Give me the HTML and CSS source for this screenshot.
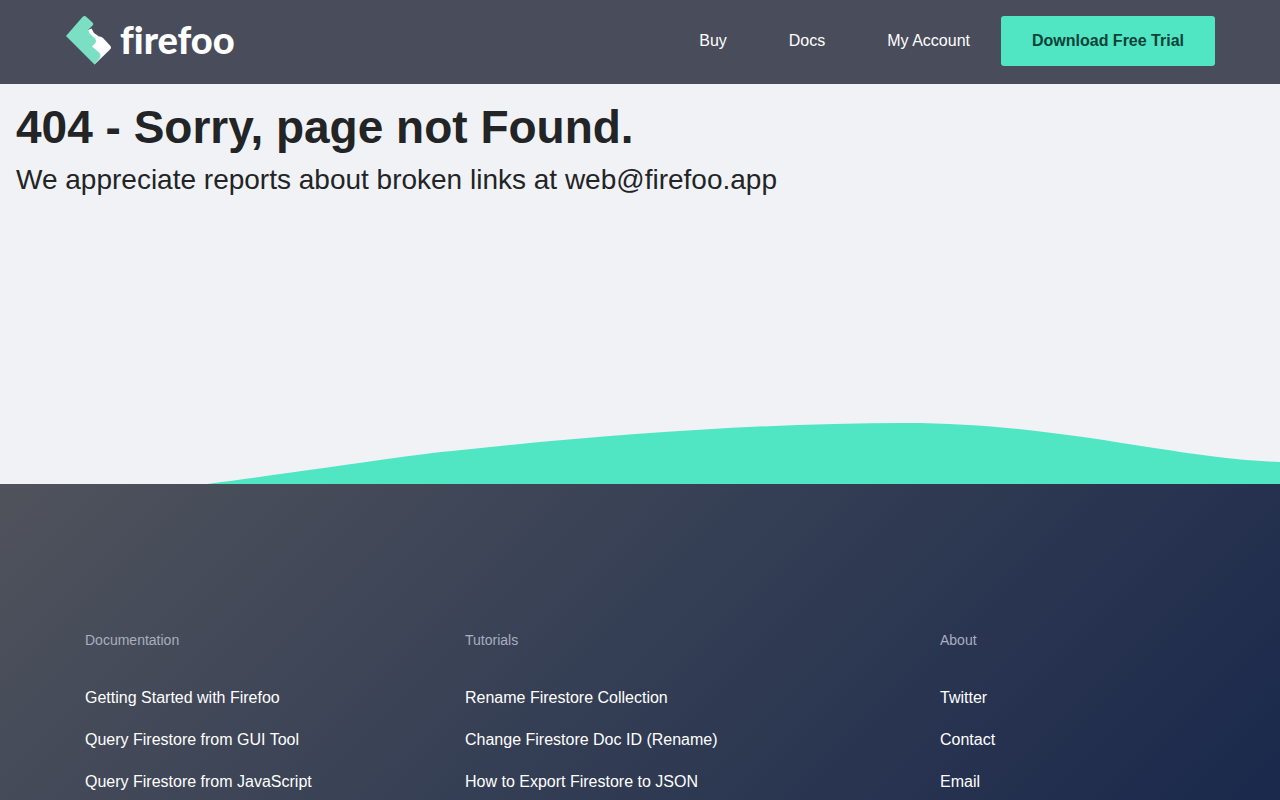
FILE: index.html
```html
<!DOCTYPE html>
<html lang="en">
<head>
    <meta charset="UTF-8">
    <meta name="viewport" content="width=device-width, initial-scale=1.0">
    <title>404 - Firefoo</title>
    <link rel="stylesheet" href="styles.css">
</head>
<body>
    <header class="header">
        <nav class="navbar">
            <a class="logo" href="#">
                <svg class="logo-mark" viewBox="0 0 45 49" width="45" height="49" aria-hidden="true">
                    <path fill="#ffffff" d="M22 14 L25.500 12.500 L28 17 L33 20.500 Q35 20 37 22 L44 29.500 Q46 31.500 44 33.500 L28.500 48.500 Z"/>
                    <path fill="#7adfc3" d="M0 20 L16.500 1 Q18.500 -1 20.500 1 L26.500 6.500 Q28 8 26.500 9.500 L22 14 L23.500 17.500 L29 22.500 Q31 25 29 27.500 L26 30.500 L33 36.500 Q36 39.500 33 43 L28.500 48.500 Z"/>
                </svg>
                <span class="logo-text">firefoo</span>
            </a>
            <div class="nav-links">
                <a class="nav-link" href="#">Buy</a>
                <a class="nav-link" href="#">Docs</a>
                <a class="nav-link" href="#">My Account</a>
                <a class="btn" href="#">Download Free Trial</a>
            </div>
        </nav>
    </header>

    <main class="content">
        <h1>404 - Sorry, page not Found.</h1>
        <p class="lead">We appreciate reports about broken links at web@firefoo.app</p>
    </main>

    <svg class="wave" viewBox="0 0 1280 61" preserveAspectRatio="none" aria-hidden="true">
        <path d="M207 61 C330 45 400 33 452 28 C600 12 760 0 905 0 C1060 0 1175 36 1280 39 V61 Z"/>
    </svg>

    <footer class="footer">
        <div class="footer-row">
            <div class="footer-col">
                <h2>Documentation</h2>
                <ul>
                    <li><a href="#">Getting Started with Firefoo</a></li>
                    <li><a href="#">Query Firestore from GUI Tool</a></li>
                    <li><a href="#">Query Firestore from JavaScript</a></li>
                </ul>
            </div>
            <div class="footer-col">
                <h2>Tutorials</h2>
                <ul>
                    <li><a href="#">Rename Firestore Collection</a></li>
                    <li><a href="#">Change Firestore Doc ID (Rename)</a></li>
                    <li><a href="#">How to Export Firestore to JSON</a></li>
                </ul>
            </div>
            <div class="footer-col">
                <h2>About</h2>
                <ul>
                    <li><a href="#">Twitter</a></li>
                    <li><a href="#">Contact</a></li>
                    <li><a href="#">Email</a></li>
                </ul>
            </div>
        </div>
    </footer>
</body>
</html>
```
FILE: styles.css
```css
* {
    box-sizing: border-box;
}

body {
    margin: 0;
    background-color: #f0f2f6;
    color: #222426;
    font-family: "Liberation Sans", Arial, sans-serif;
    font-size: 16px;
    line-height: 24px;
}

a {
    color: inherit;
    text-decoration: none;
}

.header {
    background-color: #494c5a;
    color: #ffffff;
    padding: 16px 16px 18px;
}

.navbar {
    display: flex;
    align-items: flex-start;
    justify-content: space-between;
    max-width: 1150px;
    margin: 0 auto;
}

.logo {
    display: flex;
    align-items: flex-start;
    gap: 9px;
    margin-left: 1px;
}

.logo-text {
    font-family: Lato, sans-serif;
    font-size: 38px;
    font-weight: 900;
    line-height: 46px;
    font-variant-ligatures: none;
}

.nav-links {
    display: flex;
    align-items: center;
}

.nav-link {
    padding: 13px 31px;
}

.btn {
    padding: 13px 31px;
    border-radius: 3px;
    background-color: #50e5c3;
    color: #0e4238;
    font-weight: bold;
}

.content {
    min-height: 339px;
    padding: 16px;
}

h1 {
    margin: 0 0 8px;
    font-size: 46px;
    line-height: 55px;
}

.lead {
    margin: 0;
    font-size: 28px;
    line-height: 34px;
}

.wave {
    display: block;
    width: 100%;
    height: 61px;
    fill: #50e5c3;
}

.footer {
    padding: 144px 16px 0;
    background-image: linear-gradient(135deg, #50535c, #343e54 50%, #1a284b);
    color: #ffffff;
}

.footer-row {
    display: grid;
    grid-template-columns: 4fr 5fr 3fr;
    max-width: 1140px;
    margin: 0 auto;
}

.footer-col {
    padding: 0 15px;
}

.footer-col h2 {
    margin: 0 0 34px;
    color: #a9afc0;
    font-size: 14px;
    font-weight: normal;
    line-height: 24px;
}

.footer-col ul {
    display: grid;
    gap: 18px;
    margin: 0;
    padding: 0 0 6px;
    list-style: none;
}
```
